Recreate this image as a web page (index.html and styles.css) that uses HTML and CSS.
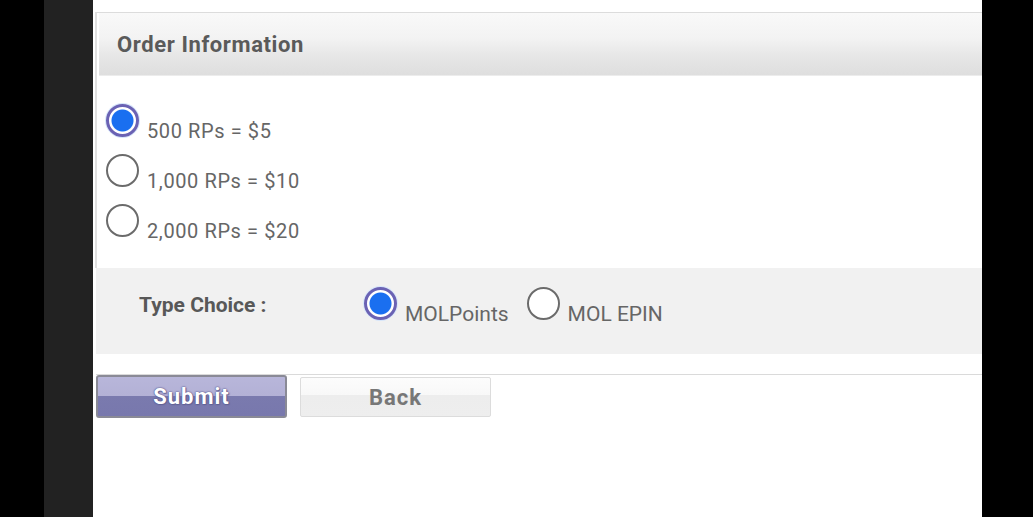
FILE: index.html
```html
<!DOCTYPE html>
<html lang="en">
<head>
<meta charset="utf-8">
<title>Order Information</title>
<link rel="stylesheet" href="styles.css">
</head>
<body>
<div class="frame">
  <div class="edge-left"></div>
  <div class="bezel"></div>
  <main class="page">
    <section class="panel">
      <h2 class="panel-head">Order Information</h2>
      <div class="options">
        <label class="opt"><input type="radio" class="radio" name="rp" checked><span class="opt-text">500 RPs = $5</span></label>
        <label class="opt"><input type="radio" class="radio" name="rp"><span class="opt-text">1,000 RPs = $10</span></label>
        <label class="opt"><input type="radio" class="radio" name="rp"><span class="opt-text">2,000 RPs = $20</span></label>
      </div>
    </section>
    <div class="type-row">
      <span class="type-label">Type Choice :</span>
      <div class="type-opts">
        <label class="type-opt"><input type="radio" class="radio" name="type" checked><span class="type-text">MOLPoints</span></label>
        <label class="type-opt"><input type="radio" class="radio" name="type"><span class="type-text">MOL EPIN</span></label>
      </div>
    </div>
    <div class="actions">
      <button class="btn btn-submit" type="button">Submit</button>
      <button class="btn btn-back" type="button">Back</button>
    </div>
  </main>
  <div class="edge-right"></div>
</div>
</body>
</html>
```

FILE: styles.css
```css
* { box-sizing: border-box; }

html, body {
  margin: 0;
  padding: 0;
  background: #000;
  font-family: Roboto, "Noto Sans", "Liberation Sans", sans-serif;
}

.frame {
  display: flex;
  height: 517px;
  overflow: hidden;
}

.edge-left { width: 44px; background: #000; }
.bezel { width: 49px; background: #222; }
.edge-right { flex: 1; background: #000; }

.page {
  width: 889px;
  background: #fff;
  padding: 12px 0 0 2px;
}

.panel {
  border-top: 1px solid #dcdcdc;
  border-left: 2px solid #e0e0e0;
}

.panel-head {
  margin: 0 0 0 2px;
  height: 63px;
  display: flex;
  align-items: center;
  padding-left: 18px;
  font-size: 22px;
  letter-spacing: 0.6px;
  font-weight: 700;
  color: #5a5a5a;
  background: linear-gradient(#f9f9f9 0%, #f3f3f3 40%, #e7e7e7 68%, #dedede 100%);
  border-bottom: 1px solid #ececec;
}

.options {
  padding: 20px 0 22px 0;
}

.opt {
  height: 50px;
  display: flex;
  align-items: flex-end;
  padding: 0 0 5px 9px;
  gap: 8px;
}

.opt .radio { margin: 0 0 4px 0; }

.opt-text {
  font-size: 20px;
  line-height: 20px;
  letter-spacing: 0.6px;
  color: #666;
}

.radio {
  appearance: none;
  -webkit-appearance: none;
  width: 33px;
  height: 33px;
  margin: 0;
  flex: none;
  border-radius: 50%;
  border: 2px solid #6b6b6b;
  background: #fff;
}

.radio:checked {
  border: 3px solid #6a62b4;
  box-shadow: 0 0 0 1px #d6e6fb;
  background: radial-gradient(circle, #1a6ff0 0, #1a6ff0 10.5px, #fff 11.5px);
}

.type-row {
  margin-left: 1px;
  height: 86px;
  background: #f1f1f1;
  display: flex;
  align-items: flex-start;
  padding-top: 19px;
}

.type-label {
  width: 268px;
  padding-left: 43px;
  margin-top: 6px;
  font-size: 21px;
  line-height: 24px;
  font-weight: 700;
  color: #585858;
}

.type-opts {
  display: flex;
  align-items: flex-end;
  gap: 18px;
}

.type-opt {
  display: flex;
  align-items: flex-end;
  gap: 8px;
}

.type-opt .radio { margin-bottom: 6px; }

.type-text {
  font-size: 21px;
  line-height: 24px;
  color: #666;
}

.actions {
  margin: 20px 0 0 1px;
  border-top: 1px solid #dadada;
  display: flex;
  align-items: flex-start;
  gap: 13px;
}

.btn {
  width: 191px;
  font-family: Roboto, "Noto Sans", "Liberation Sans", sans-serif;
  font-size: 22px;
  letter-spacing: 1px;
  font-weight: 700;
  padding: 0;
  cursor: pointer;
}

.btn-submit {
  height: 43px;
  border: 2px solid #8a8a96;
  border-radius: 3px;
  color: #fff;
  background: linear-gradient(#b8b6da 0%, #b3b1d6 48%, #7a7aae 48%, #7878ad 100%);
  text-shadow: 0 0 2px #50508a, 0 0 1px #50508a, 1px 1px 1px #6a6a9a;
}

.btn-back {
  height: 40px;
  margin-top: 2px;
  border: 1px solid #dcdcdc;
  border-radius: 2px;
  color: #777;
  background: linear-gradient(#fcfcfc 0%, #f8f8f8 45%, #ededed 45%, #eeeeee 100%);
}
```
